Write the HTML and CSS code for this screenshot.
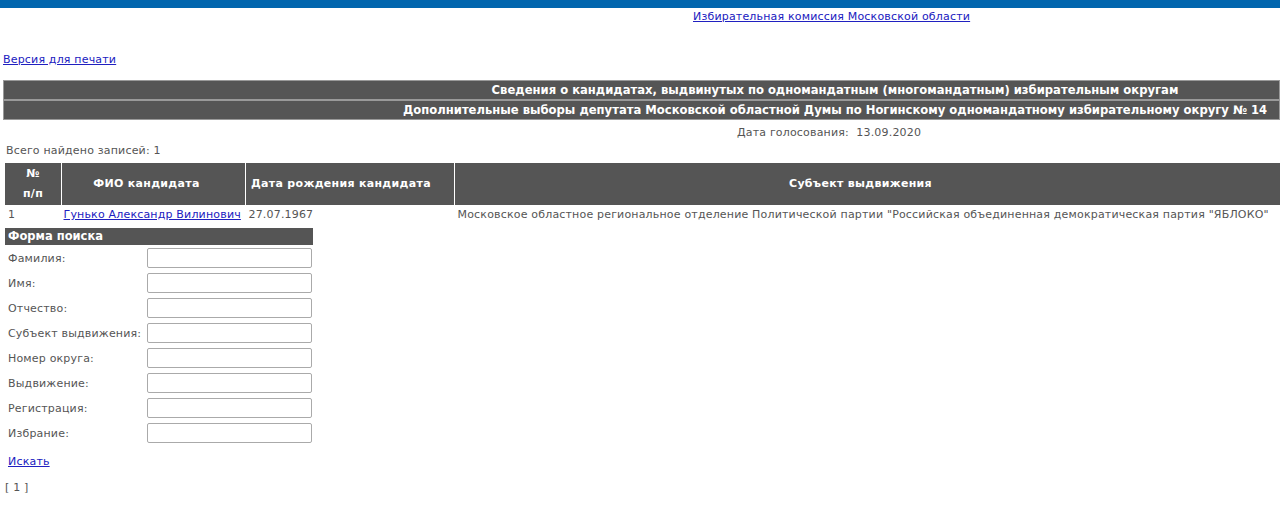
FILE: index.html
```html
<!DOCTYPE html>
<html lang="ru">
<head>
    <meta charset="UTF-8">
    <title>Сведения о кандидатах</title>
    <link rel="stylesheet" href="styles.css">
</head>
<body>
    <div class="top-bar"></div>
    <div class="site-title">
        <a href="#">Избирательная комиссия Московской области</a>
    </div>

    <div class="print-link"><a href="#">Версия для печати</a></div>

    <div class="caption">
        <div class="caption-row">Сведения о кандидатах, выдвинутых по одномандатным (многомандатным) избирательным округам</div>
        <div class="caption-row">Дополнительные выборы депутата Московской областной Думы по Ногинскому одномандатному избирательному округу № 14</div>
    </div>

    <div class="vote-date">Дата голосования:&nbsp; 13.09.2020</div>
    <div class="total">Всего найдено записей: 1</div>

    <table class="candidates">
        <thead>
            <tr>
                <th class="col-num">№<br>п/п</th>
                <th class="col-name">ФИО кандидата</th>
                <th class="col-birth">Дата рождения кандидата</th>
                <th class="col-subject">Субъект выдвижения</th>
            </tr>
        </thead>
        <tbody>
            <tr>
                <td>1</td>
                <td class="cell-name"><a href="#">Гунько Александр Вилинович</a></td>
                <td>27.07.1967</td>
                <td>Московское областное региональное отделение Политической партии "Российская объединенная демократическая партия "ЯБЛОКО"</td>
            </tr>
        </tbody>
    </table>

    <form class="search-form">
        <div class="search-title">Форма поиска</div>
        <div class="search-row"><label>Фамилия:</label><input type="text"></div>
        <div class="search-row"><label>Имя:</label><input type="text"></div>
        <div class="search-row"><label>Отчество:</label><input type="text"></div>
        <div class="search-row"><label>Субъект выдвижения:</label><input type="text"></div>
        <div class="search-row"><label>Номер округа:</label><input type="text"></div>
        <div class="search-row"><label>Выдвижение:</label><input type="text"></div>
        <div class="search-row"><label>Регистрация:</label><input type="text"></div>
        <div class="search-row"><label>Избрание:</label><input type="text"></div>
        <div class="search-submit"><a href="#">Искать</a></div>
    </form>

    <div class="pages">[ 1 ]</div>
</body>
</html>
```
FILE: styles.css
```css
body {
    margin: 0;
    font-family: "DejaVu Sans", Verdana, sans-serif;
    font-size: 11px;
    letter-spacing: 0.18px;
    color: #555;
    background: #fff;
}
a {
    color: #2020c0;
}
.top-bar {
    height: 8px;
    background-color: #0266ae;
}
.site-title {
    padding: 2px 0 0 693px;
    height: 16px;
    line-height: 14px;
}
.print-link {
    margin-top: 27px;
    padding-left: 3px;
    line-height: 14px;
}
.caption {
    margin: 13px 0 0 3px;
    border: 1px solid #999;
}
.caption-row {
    background-color: #555;
    color: #fff;
    font-weight: bold;
    font-size: 11.6px;
    letter-spacing: 0;
    text-align: center;
    height: 18px;
    line-height: 18px;
    padding-left: 387px;
}
.caption-row + .caption-row {
    border-top: 2px solid #999;
}
.vote-date {
    padding-left: 737px;
    margin-top: 6px;
    line-height: 14px;
}
.total {
    padding-left: 6px;
    margin-top: 4px;
    line-height: 14px;
}
.candidates {
    margin: 5px 0 0 5px;
    width: 1275px;
    border-collapse: collapse;
}
.candidates th {
    background-color: #555;
    color: #fff;
    font-weight: bold;
    letter-spacing: 0.3px;
    height: 42px;
    padding: 0 4px;
    border-left: 1px solid #fff;
    vertical-align: middle;
    line-height: 20px;
}
.candidates th:first-child {
    border-left: none;
}
.col-num { width: 48px; }
.col-name { width: 161px; padding-right: 18px !important; }
.col-birth { width: 199px; text-align: left; padding-left: 5px !important; }
.col-subject { padding-right: 18px !important; }
.candidates td {
    padding: 3px 3px 0;
    line-height: 14px;
    vertical-align: top;
    white-space: nowrap;
}
.candidates td.cell-name {
    padding-left: 2px;
}
.search-form {
    margin: 6px 0 0 5px;
    width: 308px;
}
.search-title {
    background-color: #555;
    color: #fff;
    font-weight: bold;
    font-size: 11.5px;
    letter-spacing: 0;
    height: 17px;
    line-height: 17px;
    padding-left: 3px;
}
.search-row {
    display: flex;
    align-items: center;
    height: 25px;
}
.search-row label {
    width: 139px;
    padding-left: 3px;
    padding-top: 2px;
}
.search-row input {
    width: 165px;
    height: 20px;
    box-sizing: border-box;
    border: 1px solid #aaa;
    border-radius: 2px;
    margin: 0;
    padding: 0 2px;
}
.search-submit {
    padding: 10px 0 0 3px;
    line-height: 14px;
}
.pages {
    padding-left: 5px;
    margin-top: 12px;
}
```
